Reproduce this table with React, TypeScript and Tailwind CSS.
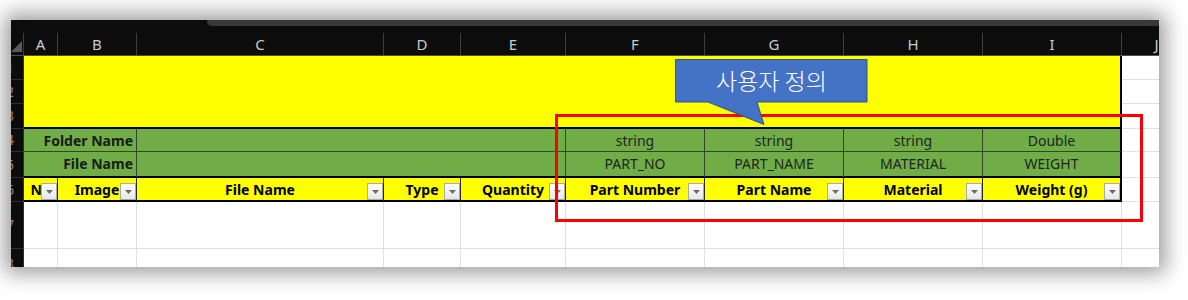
import React from "react";

const LETTERS = ["A", "B", "C", "D", "E", "F", "G", "H", "I", "J"];

const HEADERS = ["No", "Image", "File Name", "Type", "Quantity", "Part Number", "Part Name", "Material", "Weight (g)"];

function ColHead({ label }: { label: string }) {
  return (
    <div className="flex flex-col border-b border-[#4e4e4e] bg-[#0c0c0c]">
      <div className="mt-[7px] flex-1 border-r border-[#3e3e3e] flex items-center justify-center text-[15px] leading-none text-[#c6cbd1]">
        {label}
      </div>
    </div>
  );
}

function RowHead({ n }: { n: number }) {
  return (
    <div className="overflow-hidden flex items-center border-r border-b border-[#2f2f2f] bg-[#0c0c0c]">
      <span className="-ml-[5px] text-[14px] leading-none text-[#a87c5c]">{n}</span>
    </div>
  );
}

function Blank({ grid = true }: { grid?: boolean }) {
  return <div className={grid ? "bg-white border-r border-b border-[#e1e1e1]" : "bg-white border-b border-[#e1e1e1]"} />;
}

function Green({ text, last = false }: { text: string; last?: boolean }) {
  return (
    <div
      className={
        last
          ? "bg-[#70ad47] border-b border-[#34452a] border-r-2 border-r-black flex items-center justify-center text-[14px] text-[#222]"
          : "bg-[#70ad47] border-b border-r border-[#34452a] flex items-center justify-center text-[14px] text-[#222]"
      }
    >
      {text}
    </div>
  );
}

function FilterButton() {
  return (
    <div className="absolute right-0 bottom-0 w-4 h-[17px] border border-[#ababab] bg-gradient-to-b from-white to-[#e6e6e6] flex items-center justify-center">
      <svg width="7" height="4" viewBox="0 0 7 4">
        <path d="M0 0 H7 L3.5 4 Z" fill="#6b6b6b" />
      </svg>
    </div>
  );
}

function HeadCell({ text, last = false }: { text: string; last?: boolean }) {
  return (
    <div
      className={
        last
          ? "relative overflow-hidden bg-[#ffff00] border-b-2 border-b-black border-r-2 border-r-black flex items-center justify-center whitespace-nowrap text-[14px] font-bold text-black"
          : "relative overflow-hidden bg-[#ffff00] border-b-2 border-b-black border-r border-r-[#2a2a2a] flex items-center justify-center whitespace-nowrap text-[14px] font-bold text-black"
      }
    >
      {text}
      <FilterButton />
    </div>
  );
}

export default function App() {
  return (
    <div className="relative w-[1188px] h-[300px] bg-white overflow-hidden font-['Noto_Sans','Noto_Sans_CJK_KR',sans-serif]">
      <div className="pl-[11px] pt-[20px]">
        <div className="w-[1148px] h-[247px] bg-[#0c0c0c] overflow-hidden flex flex-col shadow-[0_0_20px_6px_rgba(0,0,0,0.4)]">
          {/* top strip */}
          <div className="h-[6px] flex shrink-0">
            <div className="w-[196px]" />
            <div className="flex-1 bg-[#383838] rounded-bl-[5px]" />
          </div>

          {/* sheet */}
          <div className="grid shrink-0 w-[1181px] grid-cols-[13px_34px_79px_247px_77px_105px_139px_139px_139px_139px_70px] grid-rows-[30px_24px_24px_25px_23px_26px_24px_47px_30px]">
            {/* column letters */}
            <div className="flex flex-col border-b border-[#4e4e4e]">
              <div className="mt-[7px] flex-1 border-r border-[#3e3e3e] flex items-end">
                <svg width="11" height="11" viewBox="0 0 11 11" className="mb-[3px]">
                  <path d="M11 0 V11 H0 Z" fill="#5a5a5a" />
                </svg>
              </div>
            </div>
            {LETTERS.map((l) => (
              <ColHead key={l} label={l} />
            ))}

            {/* rows 1-3: merged yellow title */}
            <RowHead n={1} />
            <div className="col-span-9 row-span-3 bg-[#ffff00] border-r-2 border-b-2 border-black" />
            <Blank grid={false} />
            <RowHead n={2} />
            <Blank grid={false} />
            <RowHead n={3} />
            <Blank grid={false} />

            {/* row 4 */}
            <RowHead n={4} />
            <div className="col-span-2 bg-[#70ad47] border-r border-b border-[#34452a] flex items-center justify-end pr-[3px] text-[14px] font-bold text-[#1a1a1a]">
              Folder Name
            </div>
            <div className="col-span-3 bg-[#70ad47] border-r border-b border-[#34452a]" />
            <Green text="string" />
            <Green text="string" />
            <Green text="string" />
            <Green text="Double" last />
            <Blank grid={false} />

            {/* row 5 */}
            <RowHead n={5} />
            <div className="col-span-2 bg-[#70ad47] border-r border-[#34452a] border-b-2 border-b-black flex items-center justify-end pr-[3px] pb-[1px] text-[14px] font-bold text-[#1a1a1a]">
              File Name
            </div>
            <div className="col-span-3 bg-[#70ad47] border-r border-[#34452a] border-b-2 border-b-black" />
            <div className="bg-[#70ad47] border-r border-[#34452a] border-b-2 border-b-black flex items-center justify-center pb-[1px] text-[14px] text-[#222]">PART_NO</div>
            <div className="bg-[#70ad47] border-r border-[#34452a] border-b-2 border-b-black flex items-center justify-center pb-[1px] text-[14px] text-[#222]">PART_NAME</div>
            <div className="bg-[#70ad47] border-r border-[#34452a] border-b-2 border-b-black flex items-center justify-center pb-[1px] text-[14px] text-[#222]">MATERIAL</div>
            <div className="bg-[#70ad47] border-r-2 border-r-black border-b-2 border-b-black flex items-center justify-center pb-[1px] text-[14px] text-[#222]">WEIGHT</div>
            <Blank grid={false} />

            {/* row 6: table header */}
            <RowHead n={6} />
            {HEADERS.map((h, i) => (
              <HeadCell key={h} text={h} last={i === HEADERS.length - 1} />
            ))}
            <Blank grid={false} />

            {/* rows 7-8 */}
            <RowHead n={7} />
            {HEADERS.map((h) => (
              <Blank key={h} />
            ))}
            <Blank grid={false} />
            <RowHead n={8} />
            {HEADERS.map((h) => (
              <Blank key={h} />
            ))}
            <Blank grid={false} />
          </div>
        </div>
      </div>

      {/* red annotation box */}
      <div className="absolute left-[555px] top-[114px] w-[588px] h-[108px] border-[3px] border-[#ff0000]" />

      {/* callout */}
      <div className="absolute left-[675px] top-[59px] w-[193px] h-[66px]">
        <svg width="193" height="66" viewBox="0 0 193 66" className="absolute inset-0">
          <path d="M0.5 0.5 H192 V43 H82 L89 65.5 L33 43 H0.5 Z" fill="#4472c4" stroke="#2f528f" strokeWidth="1" />
        </svg>
        <div className="relative h-[43px] flex items-center justify-center text-[23px] font-light text-white font-['Noto_Sans_CJK_KR',sans-serif]">
          사용자 정의
        </div>
      </div>
    </div>
  );
}
